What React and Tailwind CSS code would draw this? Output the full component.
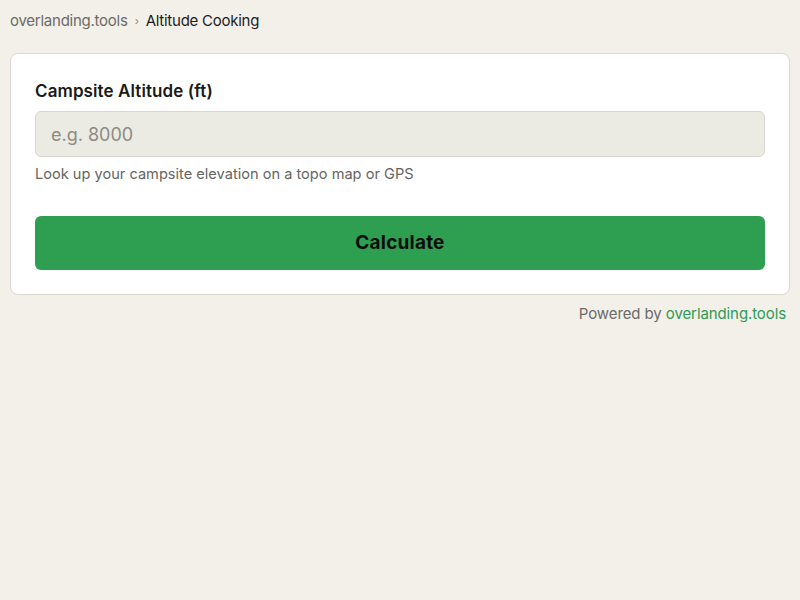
export default function App() {
  return (
    <div className="min-h-[600px] bg-[#f3f0ea] px-[10px] pt-[11px]" style={{ fontFamily: '"Inter", "Noto Sans", sans-serif' }}>
      <div className="flex items-center h-[20px] text-[15px] tracking-[-0.25px]">
        <span className="text-[#6b6b66]">overlanding.tools</span>
        <span className="mx-[7px] text-[11px] text-[#8a8a85]">›</span>
        <span className="text-[#1c1c1a]">Altitude Cooking</span>
      </div>
      <div className="mt-[22px] bg-white border border-[#dcd8cf] rounded-[8px] p-[24px]">
        <div className="text-[17px] font-semibold text-[#1a1a18] leading-[26px] tracking-[0.1px]">Campsite Altitude (ft)</div>
        <div className="mt-[7px] h-[46px] bg-[#ecebe3] border border-[#d9d6cc] rounded-[6px] flex items-center px-[15px]">
          <span className="text-[18px] text-[#8b8a84]">e.g. 8000</span>
        </div>
        <div className="mt-[7px] text-[14.6px] leading-[20px] text-[#66655f]">Look up your campsite elevation on a topo map or GPS</div>
        <button className="mt-[32px] w-full h-[54px] bg-[#2e9e50] rounded-[6px] text-[19px] font-bold text-[#0d0d0d] tracking-[0.2px]">Calculate</button>
      </div>
      <div className="mt-[9px] text-right pr-[4px] text-[15px] leading-[20px] text-[#6b6b66] tracking-[-0.1px]">
        Powered by <span className="text-[#2e9a55]">overlanding.tools</span>
      </div>
    </div>
  );
}
